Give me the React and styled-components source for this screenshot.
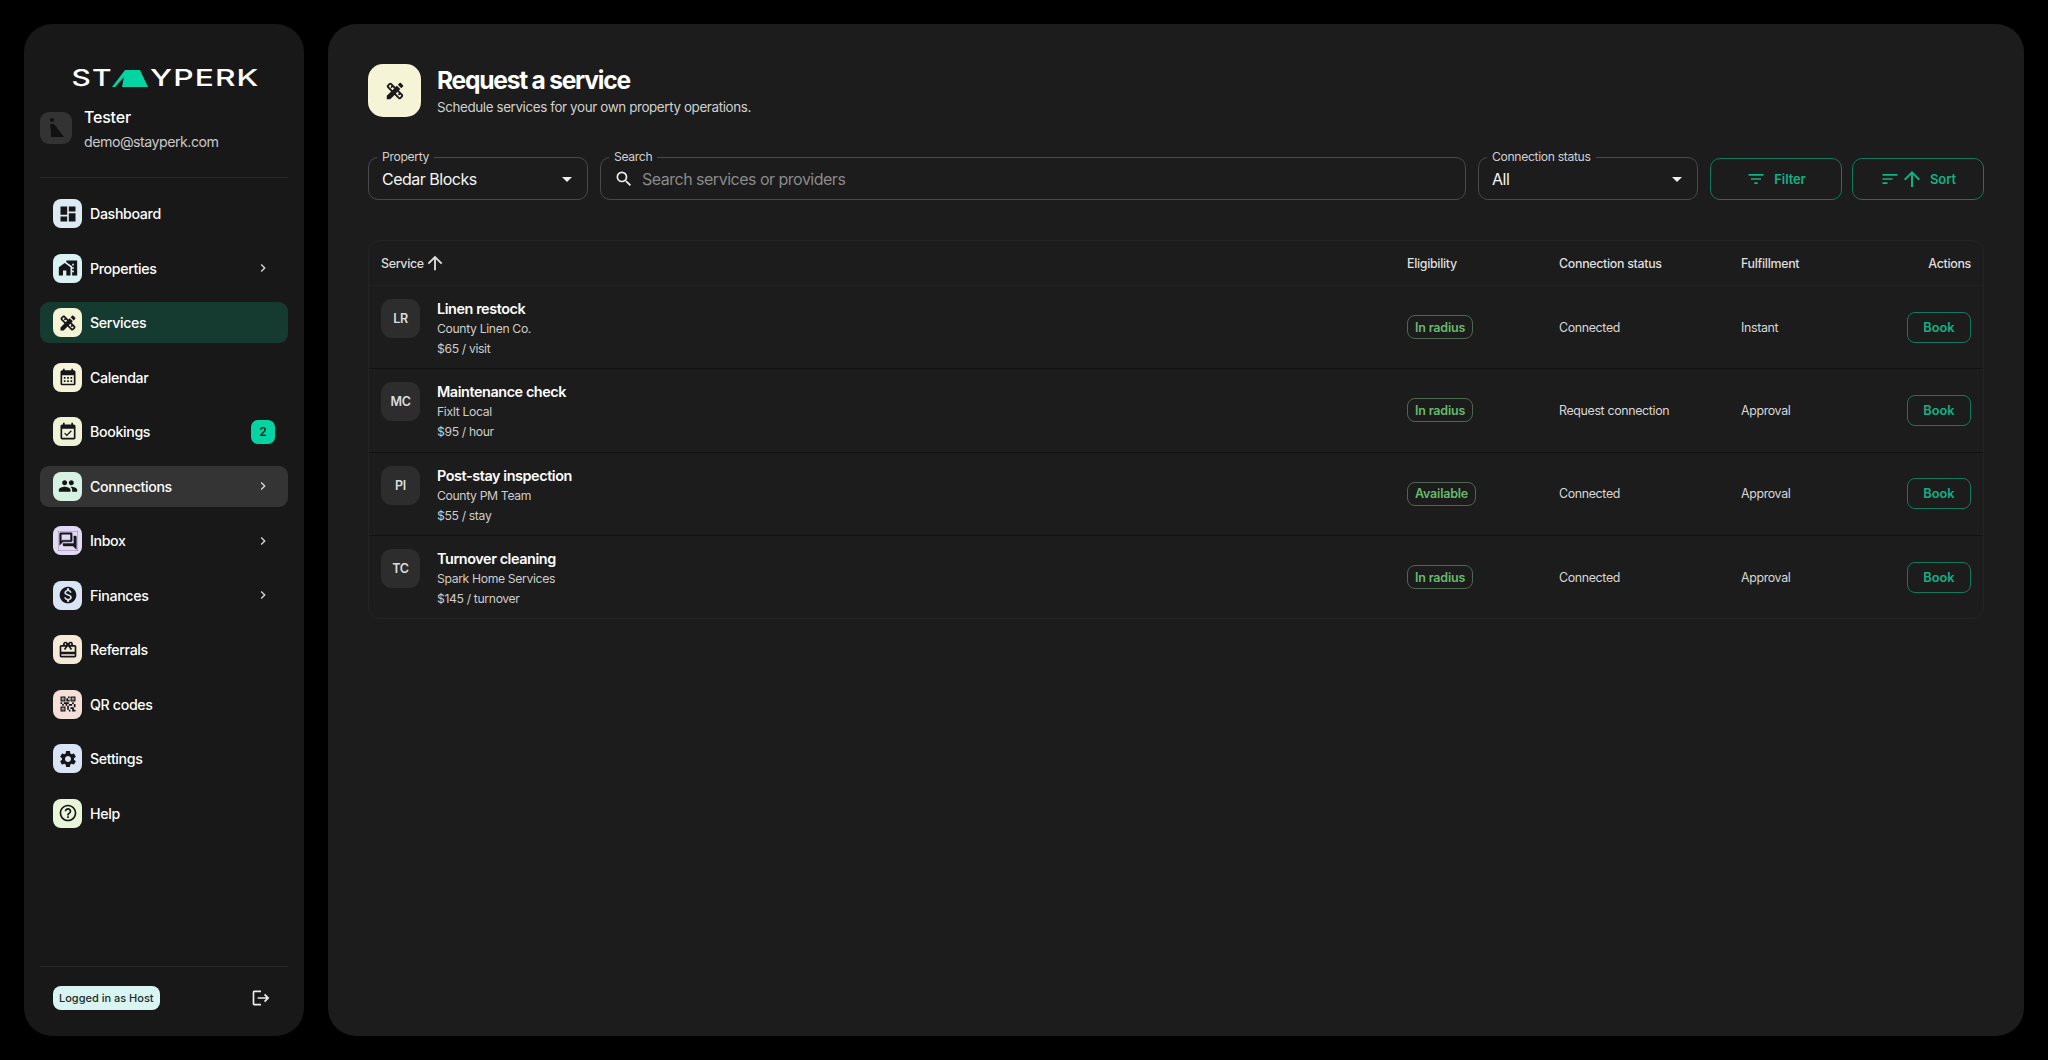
import styled, { createGlobalStyle } from "styled-components";
import {
  MdDashboard,
  MdMapsHomeWork,
  MdDesignServices,
  MdCalendarMonth,
  MdEventAvailable,
  MdPeople,
  MdOutlineForum,
  MdMonetizationOn,
  MdRedeem,
  MdQrCode2,
  MdSettings,
  MdHelpOutline,
  MdLogout,
  MdFilterList,
  MdSort,
  MdArrowUpward,
  MdSearch,
  MdChevronRight,
  MdArrowDropDown,
} from "react-icons/md";

const GlobalStyle = createGlobalStyle`
  html, body {
    margin: 0;
    padding: 0;
    background: #000;
  }
  body {
    font-family: "Inter", "Noto Sans", sans-serif;
    color: #fff;
  }
`;

const Page = styled.div`
  display: flex;
  gap: 24px;
  height: 1060px;
  padding: 24px;
  box-sizing: border-box;
  background: #000;
`;

const Sidebar = styled.aside`
  width: 280px;
  flex-shrink: 0;
  display: flex;
  flex-direction: column;
  box-sizing: border-box;
  padding: 43px 16px 0;
  background: #181818;
  border-radius: 28px;
`;

const Logo = styled.div`
  display: flex;
  align-items: center;
  justify-content: center;
  height: 22px;
  font-weight: 500;
  font-size: 23px;
  line-height: 22px;
  color: #fff;
`;

const LogoText = styled.span`
  display: inline-block;
  transform: scaleX(${(p) => (p.$end ? 1.38 : 1.3)});
  transform-origin: ${(p) => (p.$end ? "left" : "right")} center;
  margin-right: ${(p) => (p.$end ? "18px" : "0")};
  letter-spacing: 0.8px;
`;

const LogoMark = styled.svg`
  margin: 0 1px 0 0;
  flex-shrink: 0;
`;

const Profile = styled.div`
  display: flex;
  align-items: center;
  gap: 12px;
  margin-top: 16px;
  padding-bottom: 23px;
  border-bottom: 1px solid #292929;
`;

const Avatar = styled.div`
  width: 32px;
  height: 32px;
  margin-bottom: 3px;
  border-radius: 9px;
  background: #333;
  display: flex;
  align-items: center;
  justify-content: center;
`;

const ProfileName = styled.div`
  font-size: 16px;
  font-weight: 500;
  line-height: 24px;
  letter-spacing: -0.2px;
`;

const ProfileMail = styled.div`
  font-size: 14.2px;
  line-height: 25px;
  letter-spacing: -0.5px;
  color: #c8c8c8;
`;

const Nav = styled.nav`
  display: flex;
  flex-direction: column;
  gap: 13.5px;
  margin-top: 15px;
  flex: 1;
`;

const NavRow = styled.div`
  height: 41px;
  display: flex;
  align-items: center;
  padding: 0 13px;
  border-radius: 9px;
  background: ${(p) =>
    p.$active ? "#153a30" : p.$hover ? "#343434" : "transparent"};
`;

const NavTile = styled.span`
  width: 29px;
  height: 29px;
  border-radius: 8px;
  display: flex;
  align-items: center;
  justify-content: center;
  color: #15151a;
  font-size: 20px;
  background: ${(p) => p.$bg};
  svg {
    stroke: currentColor;
    stroke-width: ${(p) => (p.$heavy ? "0.5px" : "0")};
  }
`;

const NavLabel = styled.span`
  margin-left: 8px;
  flex: 1;
  font-size: 14.2px;
  font-weight: 500;
  letter-spacing: -0.35px;
  color: #fff;
`;

const NavChevron = styled.span`
  display: flex;
  color: #d8d8d8;
  font-size: 16px;
  margin-right: 4px;
`;

const NavBadge = styled.span`
  width: 24px;
  height: 24px;
  border-radius: 7px;
  background: #04d3a2;
  color: #10231e;
  font-size: 12px;
  font-weight: 600;
  display: flex;
  align-items: center;
  justify-content: center;
`;

const SideFooter = styled.div`
  display: flex;
  align-items: center;
  justify-content: space-between;
  height: 70px;
  box-sizing: border-box;
  padding: 0 17px 7px 13px;
  border-top: 1px solid #292929;
`;

const RoleChip = styled.span`
  height: 24px;
  display: flex;
  align-items: center;
  padding: 0 6px;
  border-radius: 8px;
  background: #d9f5f1;
  color: #1e2a2a;
  font-size: 11px;
  font-weight: 500;
`;

const LogoutIcon = styled.span`
  display: flex;
  color: #eee;
  font-size: 20px;
`;

const Main = styled.main`
  flex: 1;
  min-width: 0;
  box-sizing: border-box;
  padding: 40px 40px 0;
  background: #1c1c1c;
  border-radius: 28px;
`;

const Header = styled.header`
  display: flex;
  align-items: center;
  gap: 16px;
`;

const HeaderTile = styled.div`
  width: 53px;
  height: 53px;
  border-radius: 15px;
  background: #f6f4d6;
  color: #1a1a1a;
  font-size: 22px;
  display: flex;
  align-items: center;
  justify-content: center;
`;

const Title = styled.h1`
  margin: 0 0 1px;
  font-size: 24.6px;
  line-height: 31px;
  font-weight: 700;
  letter-spacing: -1.25px;
  color: #fff;
`;

const Subtitle = styled.p`
  margin: 0;
  font-size: 13.4px;
  line-height: 20px;
  letter-spacing: -0.38px;
  color: #d0d0d0;
`;

const Toolbar = styled.div`
  display: flex;
  gap: 12px;
  margin-top: 40px;
`;

const Field = styled.fieldset`
  position: relative;
  margin: 0;
  min-width: 0;
  box-sizing: border-box;
  width: ${(p) => p.$width || "auto"};
  flex: ${(p) => (p.$grow ? "1" : "none")};
  height: 43px;
  padding: 0 13px;
  border: 1px solid #494949;
  border-radius: 10px;
  display: flex;
  align-items: center;
  gap: 8px;
  font-size: 16px;
  letter-spacing: -0.5px;
  color: #f5f5f5;
`;

const FieldLabel = styled.span`
  position: absolute;
  left: 8px;
  top: -9px;
  padding: 0 5px;
  background: #1c1c1c;
  color: #d0d0d0;
  font-size: 12.2px;
  line-height: 15px;
  letter-spacing: -0.35px;
`;

const FieldValue = styled.span`
  flex: 1;
  color: ${(p) => (p.$placeholder ? "#8a8a8a" : "#f5f5f5")};
`;

const FieldIcon = styled.span`
  display: flex;
  color: ${(p) => p.$color || "#eee"};
  font-size: ${(p) => p.$size || 24}px;
  margin-right: ${(p) => p.$shift || 0}px;
`;

const ButtonGroup = styled.div`
  display: flex;
  gap: 10px;
  margin-top: 1px;
`;

const ToolButton = styled.button`
  width: 132px;
  height: 42px;
  box-sizing: border-box;
  background: transparent;
  border: 1px solid #11795e;
  border-radius: 10px;
  color: #12b184;
  font-family: inherit;
  font-size: 13px;
  font-weight: 600;
  letter-spacing: -0.1px;
  display: flex;
  align-items: center;
  justify-content: center;
  gap: 8px;
  svg {
    font-size: 20px;
  }
  svg.up {
    font-size: 24px;
    margin: 0 -2px 0 -8px;
  }
`;

const Table = styled.table`
  width: 100%;
  margin-top: 40px;
  border-collapse: separate;
  border-spacing: 0;
  border: 1px solid #242424;
  border-radius: 12px;
  table-layout: fixed;
`;

const HeadCell = styled.th`
  height: 44px;
  padding: 0 0 0 ${(p) => (p.$first ? "12px" : "0")};
  padding-right: ${(p) => (p.$right ? "12px" : "0")};
  text-align: ${(p) => (p.$right ? "right" : "left")};
  font-size: 12.4px;
  font-weight: 500;
  letter-spacing: -0.3px;
  color: #dedede;
`;

const SortMark = styled.span`
  display: inline-flex;
  align-items: center;
  gap: 0;
  svg {
    font-size: 22px;
  }
`;

const Cell = styled.td`
  height: 82.3px;
  padding: 0 ${(p) => (p.$right ? "12px" : "0")} 0 ${(p) => (p.$first ? "12px" : "0")};
  text-align: ${(p) => (p.$right ? "right" : "left")};
  vertical-align: middle;
  font-size: 12.4px;
  letter-spacing: -0.35px;
  color: #d8d8d8;
  border-top: 1px solid ${(p) => (p.$top ? "#212121" : "#111")};
`;

const ServiceWrap = styled.div`
  display: flex;
  gap: 17px;
  align-items: flex-start;
  padding-top: 4px;
`;

const Initials = styled.div`
  width: 39px;
  height: 39px;
  border-radius: 11px;
  background: #2d2d2d;
  color: #dcdcdc;
  font-size: 12.5px;
  font-weight: 600;
  display: flex;
  align-items: center;
  justify-content: center;
`;

const ServiceName = styled.div`
  font-size: 14.4px;
  font-weight: 600;
  line-height: 20px;
  letter-spacing: -0.42px;
  color: #fff;
`;

const ServiceLine = styled.div`
  font-size: 12.2px;
  line-height: 20px;
  letter-spacing: -0.35px;
  color: #cdcdcd;
`;

const Pill = styled.span`
  display: inline-flex;
  align-items: center;
  height: 24px;
  padding: 0 7px;
  box-sizing: border-box;
  border: 1px solid #4c6650;
  border-radius: 8px;
  color: #67b96b;
  font-size: 12.5px;
  font-weight: 600;
  letter-spacing: -0.2px;
`;

const BookButton = styled.button`
  width: 64px;
  height: 31px;
  box-sizing: border-box;
  background: transparent;
  border: 1px solid #11795e;
  border-radius: 8px;
  color: #12b184;
  font-family: inherit;
  font-size: 12.8px;
  font-weight: 600;
`;

const navItems = [
  { label: "Dashboard", Icon: MdDashboard, bg: "#dcebf3" },
  { label: "Properties", Icon: MdMapsHomeWork, bg: "#d8f3f1", chevron: true },
  { label: "Services", Icon: MdDesignServices, bg: "#f6f4d6", active: true },
  { label: "Calendar", Icon: MdCalendarMonth, bg: "#f5f4d8" },
  { label: "Bookings", Icon: MdEventAvailable, bg: "#eef3d8", badge: 2 },
  { label: "Connections", Icon: MdPeople, bg: "#d5f2e3", chevron: true, hover: true },
  { label: "Inbox", Icon: MdOutlineForum, bg: "#e3d8f5", chevron: true, heavy: true },
  { label: "Finances", Icon: MdMonetizationOn, bg: "#d9e5f5", chevron: true },
  { label: "Referrals", Icon: MdRedeem, bg: "#f5ead8" },
  { label: "QR codes", Icon: MdQrCode2, bg: "#f4e0d9" },
  { label: "Settings", Icon: MdSettings, bg: "#d9e5f7" },
  { label: "Help", Icon: MdHelpOutline, bg: "#e8f5d8" },
];

const services = [
  { code: "LR", name: "Linen restock", vendor: "County Linen Co.", price: "$65 / visit", elig: "In radius", conn: "Connected", fulfil: "Instant" },
  { code: "MC", name: "Maintenance check", vendor: "FixIt Local", price: "$95 / hour", elig: "In radius", conn: "Request connection", fulfil: "Approval" },
  { code: "PI", name: "Post-stay inspection", vendor: "County PM Team", price: "$55 / stay", elig: "Available", conn: "Connected", fulfil: "Approval" },
  { code: "TC", name: "Turnover cleaning", vendor: "Spark Home Services", price: "$145 / turnover", elig: "In radius", conn: "Connected", fulfil: "Approval" },
];

export default function App() {
  return (
    <Page>
      <GlobalStyle />
      <Sidebar>
        <Logo>
          <LogoText>ST</LogoText>
          <LogoMark width="37" height="17" viewBox="0 0 37 17">
            <path d="M0 17 L13 0 H28 L36 17 H10 L12 7 L3 17 Z" fill="#04d3a2" />
          </LogoMark>
          <LogoText $end>YPERK</LogoText>
        </Logo>
        <Profile>
          <Avatar>
            <svg width="22" height="24" viewBox="0 0 22 24">
              <circle cx="7" cy="4" r="2" fill="#111" />
              <path d="M5 8 L9 8 L19 21 H6 V15 Z" fill="#111" />
            </svg>
          </Avatar>
          <div>
            <ProfileName>Tester</ProfileName>
            <ProfileMail>demo@stayperk.com</ProfileMail>
          </div>
        </Profile>
        <Nav>
          {navItems.map(({ label, Icon, bg, chevron, active, hover, badge, heavy }) => (
            <NavRow key={label} $active={active} $hover={hover}>
              <NavTile $bg={bg} $heavy={heavy}>
                <Icon />
              </NavTile>
              <NavLabel>{label}</NavLabel>
              {chevron && (
                <NavChevron>
                  <MdChevronRight />
                </NavChevron>
              )}
              {badge && <NavBadge>{badge}</NavBadge>}
            </NavRow>
          ))}
        </Nav>
        <SideFooter>
          <RoleChip>Logged in as Host</RoleChip>
          <LogoutIcon>
            <MdLogout />
          </LogoutIcon>
        </SideFooter>
      </Sidebar>
      <Main>
        <Header>
          <HeaderTile>
            <MdDesignServices />
          </HeaderTile>
          <div>
            <Title>Request a service</Title>
            <Subtitle>Schedule services for your own property operations.</Subtitle>
          </div>
        </Header>
        <Toolbar>
          <Field $width="220px">
            <FieldLabel>Property</FieldLabel>
            <FieldValue>Cedar Blocks</FieldValue>
            <FieldIcon $shift={-5}>
              <MdArrowDropDown />
            </FieldIcon>
          </Field>
          <Field $grow>
            <FieldLabel>Search</FieldLabel>
            <FieldIcon $size={20}>
              <MdSearch />
            </FieldIcon>
            <FieldValue $placeholder>Search services or providers</FieldValue>
          </Field>
          <Field $width="220px">
            <FieldLabel>Connection status</FieldLabel>
            <FieldValue>All</FieldValue>
            <FieldIcon $shift={-5}>
              <MdArrowDropDown />
            </FieldIcon>
          </Field>
          <ButtonGroup>
            <ToolButton>
              <MdFilterList />
              Filter
            </ToolButton>
            <ToolButton>
              <MdSort />
              <MdArrowUpward className="up" />
              Sort
            </ToolButton>
          </ButtonGroup>
        </Toolbar>
        <Table>
          <colgroup>
            <col />
            <col width="152" />
            <col width="182" />
            <col width="120" />
            <col width="122" />
          </colgroup>
          <thead>
            <tr>
              <HeadCell $first>
                <SortMark>
                  Service <MdArrowUpward />
                </SortMark>
              </HeadCell>
              <HeadCell>Eligibility</HeadCell>
              <HeadCell>Connection status</HeadCell>
              <HeadCell>Fulfillment</HeadCell>
              <HeadCell $right>Actions</HeadCell>
            </tr>
          </thead>
          <tbody>
            {services.map((s, i) => (
              <tr key={s.code}>
                <Cell $first $top={i === 0}>
                  <ServiceWrap>
                    <Initials>{s.code}</Initials>
                    <div>
                      <ServiceName>{s.name}</ServiceName>
                      <ServiceLine>{s.vendor}</ServiceLine>
                      <ServiceLine>{s.price}</ServiceLine>
                    </div>
                  </ServiceWrap>
                </Cell>
                <Cell $top={i === 0}>
                  <Pill>{s.elig}</Pill>
                </Cell>
                <Cell $top={i === 0}>{s.conn}</Cell>
                <Cell $top={i === 0}>{s.fulfil}</Cell>
                <Cell $right $top={i === 0}>
                  <BookButton>Book</BookButton>
                </Cell>
              </tr>
            ))}
          </tbody>
        </Table>
      </Main>
    </Page>
  );
}
